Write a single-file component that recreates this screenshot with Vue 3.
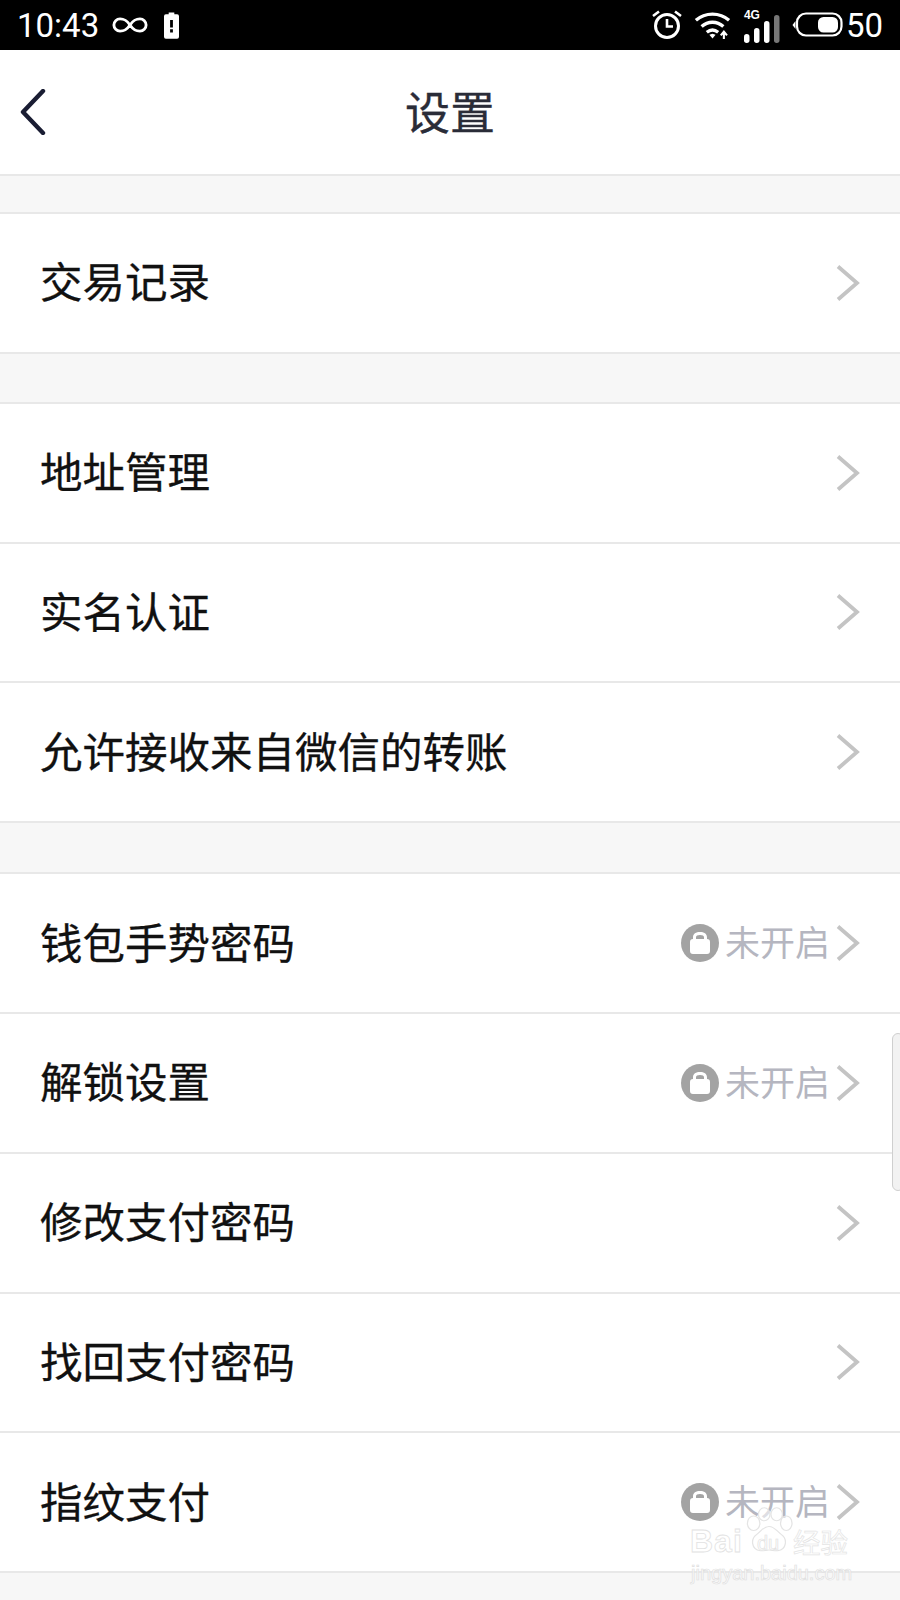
<template>
  <div class="page">
    <div class="status">
      <div class="status-left">
        <span class="time">10:43</span>
        <svg width="36" height="18" viewBox="0 0 38 18" fill="none" stroke="#fff" stroke-width="3">
          <path d="M19 9C15 3 12 2.500 8.500 2.500a6.500 6.500 0 0 0 0 13C12 15.500 15 15 19 9c4-6 7-6.500 10.500-6.500a6.500 6.500 0 0 1 0 13C26 15.500 23 15 19 9z" />
        </svg>
        <svg width="15" height="27" viewBox="0 0 16 28">
          <path fill="#fff" fill-rule="evenodd" d="M5 0h6v2h3a2 2 0 0 1 2 2v22a2 2 0 0 1-2 2H2a2 2 0 0 1-2-2V4a2 2 0 0 1 2-2h3zM6.500 8v8h3V8zm0 10v3.500h3V18z" />
        </svg>
      </div>
      <div class="status-right">
        <svg class="alarm" width="32" height="30" viewBox="0 0 32 30" fill="none" stroke="#fff">
          <circle cx="16" cy="16" r="11.500" stroke-width="3" />
          <path d="M16 9v7.500h6" stroke-width="2.600" />
          <path d="M2 6l6-4.500M30 6l-6-4.500" stroke-width="2.600" />
        </svg>
        <svg class="wifi" width="38" height="29" viewBox="0 0 36 28" fill="none" stroke="#fff" stroke-width="3.200">
          <path d="M1.500 9C10.500 1 24.500 1 33.500 9" />
          <path d="M7 15c6-5.500 15-5.500 21 0" />
          <path d="M12 20.500c3.500-2.800 7.500-2.800 11 0" />
          <path d="M14.500 23l3-1 3 1-3 3.500z" fill="#fff" stroke="none" />
          <path d="M28.500 27v-6M25.500 23.500l3-3.500 3 3.500" stroke-width="2" />
        </svg>
        <div class="signal">
          <span class="net">4G</span>
          <svg width="38" height="28" viewBox="0 0 38 28">
            <rect x="0" y="19" width="5.500" height="9" rx="2.700" fill="#fff" />
            <rect x="10" y="13" width="5.500" height="15" rx="2.700" fill="#fff" />
            <rect x="20" y="6" width="5.500" height="22" rx="2.700" fill="#fff" />
            <rect x="30" y="0" width="5.500" height="28" rx="2.700" fill="#777" />
          </svg>
        </div>
        <svg class="battery" width="51" height="26" viewBox="0 0 51 26" fill="none">
          <path d="M3.500 9v8L0.500 13z" fill="#fff" />
          <rect x="5" y="1.500" width="44.500" height="22" rx="9" stroke="#fff" stroke-width="2.200" />
          <rect x="26" y="5" width="20" height="15.500" rx="5.500" fill="#fff" />
        </svg>
        <span class="level">50</span>
      </div>
    </div>

    <header class="nav">
      <svg class="back" width="26" height="46" viewBox="0 0 26 46" fill="none" stroke="#1a1d33" stroke-width="4.400" stroke-linecap="round" stroke-linejoin="round">
        <path d="M23 2 3 23l20 21" />
      </svg>
      <h1>设置</h1>
    </header>

    <section v-for="(group, g) in groups" :key="g" class="group" :class="'group-' + g">
      <div v-for="row in group" :key="row.label" class="row">
        <span class="label">{{ row.label }}</span>
        <span v-if="row.locked" class="lock">
          <svg width="38" height="38" viewBox="0 0 38 38">
            <circle cx="19" cy="19" r="19" fill="#a3a3a3" />
            <path fill="#fff" fill-rule="evenodd" d="M12 13.500C12 9.500 15 8 19 8s7 1.500 7 5.500V15a3 3 0 0 1 3 3v9a3 3 0 0 1-3 3H12a3 3 0 0 1-3-3v-9a3 3 0 0 1 3-3zm3 1.500h8v-1.500c0-1.800-1.500-2.500-4-2.500s-4 .7-4 2.500z" />
          </svg>
          <span class="off">未开启</span>
        </span>
        <svg class="arrow" width="24" height="36" viewBox="0 0 24 36" fill="none" stroke="#c4c4c4" stroke-width="3.800">
          <path d="M2 1.500 21 18 2 34.500" />
        </svg>
      </div>
    </section>

    <div class="handle"></div>

    <div class="watermark">
      <svg class="paw" width="48" height="47" viewBox="0 0 50 58" preserveAspectRatio="none" fill="rgba(255,255,255,.55)" stroke="#e4e4e4" stroke-width="1.300">
        <ellipse cx="9" cy="20" rx="6.500" ry="9" />
        <ellipse cx="20" cy="9" rx="6" ry="8" />
        <ellipse cx="33" cy="9" rx="6" ry="8" />
        <ellipse cx="43" cy="20" rx="6" ry="9" />
        <path d="M25 24c6 0 8 6 13 10 6 5 6 18-4 20-3 .6-6-1-9-1s-6 1.600-9 1C6 52 6 39 12 34c5-4 7-10 13-10z" />
      </svg>
      <span class="wm-bai">Bai</span>
      <span class="wm-du">du</span>
      <span class="wm-cn">经验</span>
      <div class="wm-url">jingyan.baidu.com</div>
    </div>
  </div>
</template>

<script setup>
const groups = [
  [{ label: '交易记录' }],
  [{ label: '地址管理' }, { label: '实名认证' }, { label: '允许接收来自微信的转账' }],
  [
    { label: '钱包手势密码', locked: true },
    { label: '解锁设置', locked: true },
    { label: '修改支付密码' },
    { label: '找回支付密码' },
    { label: '指纹支付', locked: true },
  ],
]
</script>

<style>
html,
body {
  margin: 0;
  background: #f7f7f7;
}
</style>

<style scoped>
.page {
  position: relative;
  width: 900px;
  height: 1600px;
  overflow: hidden;
  background: #f7f7f7;
  font-family: "Liberation Sans", "Noto Sans CJK SC", sans-serif;
}

.status {
  height: 50px;
  background: #000;
  display: flex;
  align-items: center;
  justify-content: space-between;
  padding: 0 17px 0 17px;
  color: #fff;
}

.status-left,
.status-right {
  display: flex;
  align-items: center;
}

.time {
  font-family: Roboto, sans-serif;
  font-size: 33px;
  margin-right: 13px;
}

.status-left svg {
  margin-right: 16px;
}

.status-left svg:last-child {
  margin-right: 0;
}

.alarm {
  margin-right: 11px;
}

.wifi {
  margin-right: 12px;
}

.signal {
  position: relative;
  width: 38px;
  height: 36px;
  margin-right: 10px;
}

.signal svg {
  position: absolute;
  left: 0;
  bottom: 0;
}

.net {
  position: absolute;
  left: 0;
  top: 1px;
  font-size: 12px;
  font-weight: 700;
  color: #fff;
}

.battery {
  margin-right: 3px;
}

.level {
  font-family: Roboto, sans-serif;
  font-size: 33px;
}

.nav {
  height: 126px;
  box-sizing: border-box;
  background: #fff;
  border-bottom: 2px solid #e8e8e8;
  display: flex;
  align-items: center;
  justify-content: center;
  position: relative;
}

.nav h1 {
  margin: 0 0 4px;
  font-size: 45px;
  font-weight: 400;
  color: #2a2c38;
  -webkit-text-stroke: 0.3px #2a2c38;
}

.back {
  position: absolute;
  left: 20px;
  top: 39px;
}

.group {
  background: #fff;
  border-top: 2px solid #e8e8e8;
  margin-top: 36px;
}

.group-1 {
  margin-top: 48px;
}

.group-2 {
  margin-top: 49px;
}

.row {
  height: 139.800px;
  box-sizing: border-box;
  display: flex;
  align-items: center;
  padding: 0 40px;
  border-bottom: 2px solid #e8e8e8;
}

.label {
  flex: 1;
  font-size: 42.500px;
  color: #111;
  margin-bottom: 6px;
  -webkit-text-stroke: 0.3px #111;
}

.lock {
  display: flex;
  align-items: center;
  margin-right: 6px;
}

.off {
  margin-left: 6px;
  margin-bottom: 5px;
  font-size: 35px;
  color: #b5b6c0;
}

.handle {
  position: absolute;
  right: -4px;
  top: 1033px;
  width: 12px;
  height: 158px;
  box-sizing: border-box;
  background: #f2f2f2;
  border: 1px solid #cfcfcf;
  border-radius: 8px;
}

.watermark {
  position: absolute;
  left: 688px;
  top: 1502px;
  width: 170px;
  height: 90px;
  color: rgba(255, 255, 255, 0.75);
}

.watermark span,
.wm-url,
.paw {
  position: absolute;
}

.paw {
  left: 57px;
  top: 5px;
}

.wm-bai {
  left: 2px;
  top: 21px;
  font-size: 32px;
  font-weight: 700;
  letter-spacing: 1px;
  -webkit-text-stroke: 0.8px #e2e2e2;
}

.wm-du {
  left: 69px;
  top: 30px;
  font-size: 20px;
  -webkit-text-stroke: 0.7px #e2e2e2;
}

.wm-cn {
  left: 105px;
  top: 19px;
  font-size: 27.500px;
  -webkit-text-stroke: 0.7px #e4e4e4;
}

.wm-url {
  top: 60px;
  left: 3px;
  font-size: 20px;
  -webkit-text-stroke: 0.7px #e0e0e0;
}
</style>
